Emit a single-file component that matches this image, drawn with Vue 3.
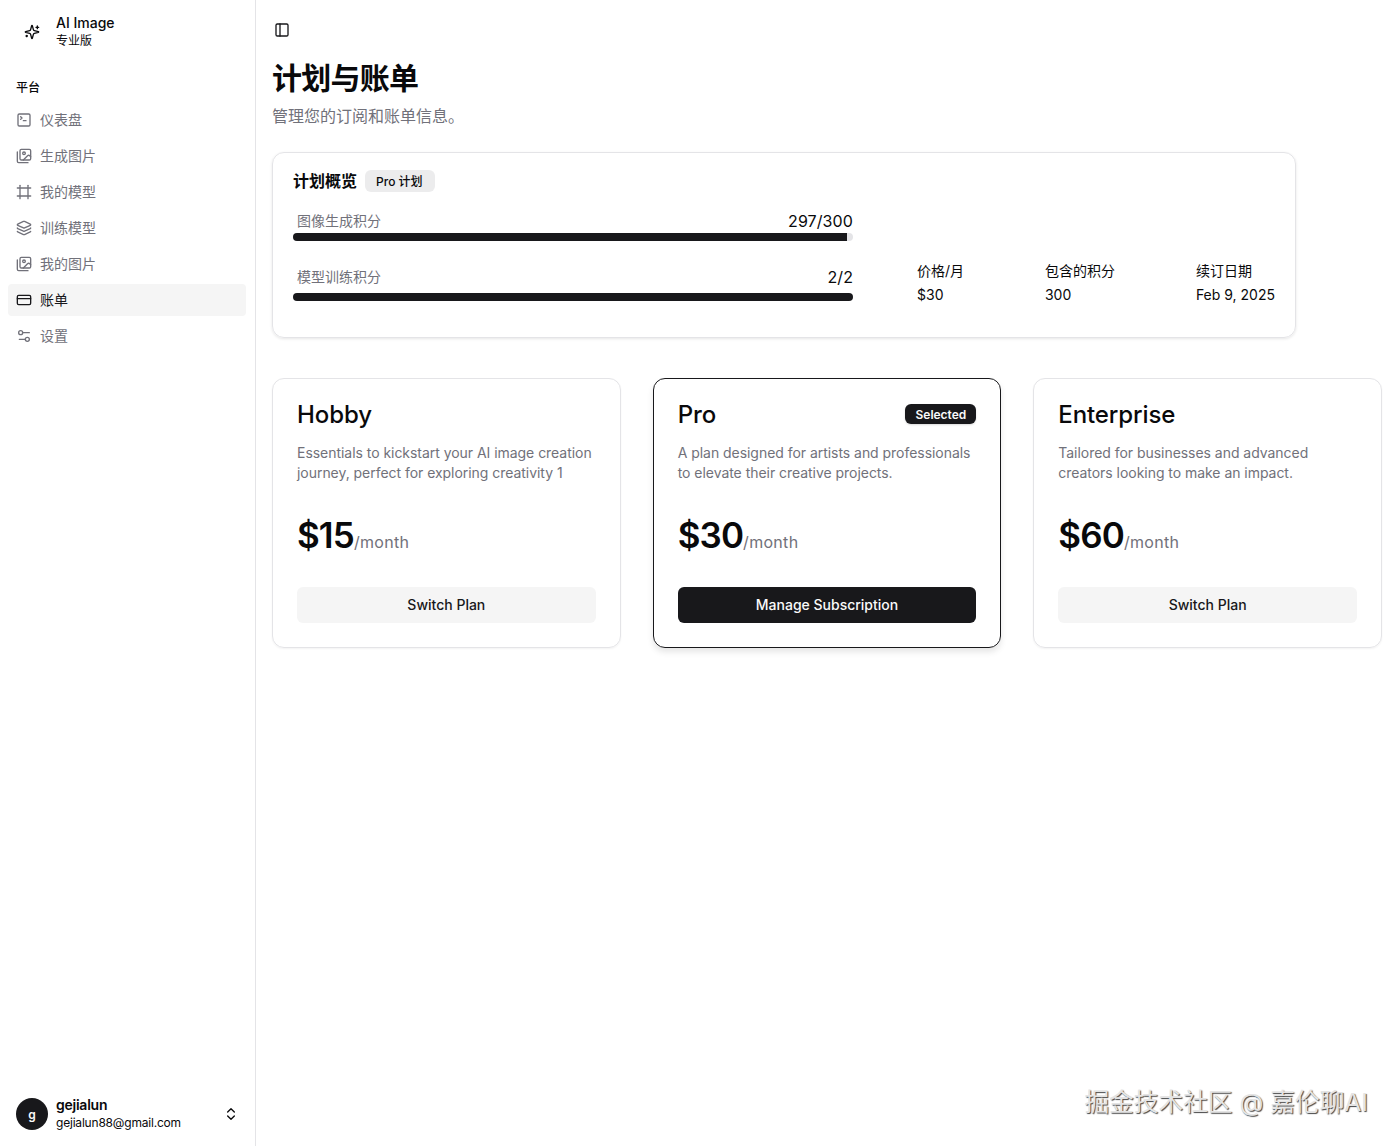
<script setup>
const imagesIcon = [
  'M18 22H4a2 2 0 0 1-2-2V6',
  'm22 13-1.296-1.296a2.41 2.41 0 0 0-3.408 0L11 18',
  'M14 8a2 2 0 1 1-4 0a2 2 0 1 1 4 0',
  'M8 2h12a2 2 0 0 1 2 2v12a2 2 0 0 1-2 2H8a2 2 0 0 1-2-2V4a2 2 0 0 1 2-2z'
]

const navItems = [
  { label: '仪表盘', icon: ['m7 11 2-2-2-2', 'M11 13h4', 'M5 3h14a2 2 0 0 1 2 2v14a2 2 0 0 1-2 2H5a2 2 0 0 1-2-2V5a2 2 0 0 1 2-2z'] },
  { label: '生成图片', icon: imagesIcon },
  { label: '我的模型', icon: ['M22 6H2', 'M22 18H2', 'M6 2v20', 'M18 2v20'] },
  {
    label: '训练模型',
    icon: [
      'M12.83 2.18a2 2 0 0 0-1.66 0L2.6 6.08a1 1 0 0 0 0 1.83l8.58 3.91a2 2 0 0 0 1.66 0l8.58-3.9a1 1 0 0 0 0-1.83z',
      'M2 12a1 1 0 0 0 .58.91l8.6 3.91a2 2 0 0 0 1.65 0l8.58-3.9A1 1 0 0 0 22 12',
      'M2 17a1 1 0 0 0 .58.91l8.6 3.91a2 2 0 0 0 1.65 0l8.58-3.9A1 1 0 0 0 22 17'
    ]
  },
  { label: '我的图片', icon: imagesIcon },
  { label: '账单', active: true, icon: ['M4 5h16a2 2 0 0 1 2 2v10a2 2 0 0 1-2 2H4a2 2 0 0 1-2-2V7a2 2 0 0 1 2-2z', 'M2 10h20'] },
  { label: '设置', icon: ['M20 7h-9', 'M14 17H5', 'M20 17a3 3 0 1 1-6 0a3 3 0 1 1 6 0', 'M10 7a3 3 0 1 1-6 0a3 3 0 1 1 6 0'] }
]

const credits = [
  { label: '图像生成积分', value: '297/300', percent: 99 },
  { label: '模型训练积分', value: '2/2', percent: 100 }
]

const facts = [
  { label: '价格/月', value: '$30' },
  { label: '包含的积分', value: '300' },
  { label: '续订日期', value: 'Feb 9, 2025' }
]

const plans = [
  { name: 'Hobby', desc: 'Essentials to kickstart your AI image creation journey, perfect for exploring creativity 1', price: '$15' },
  { name: 'Pro', desc: 'A plan designed for artists and professionals to elevate their creative projects.', price: '$30', selected: true },
  { name: 'Enterprise', desc: 'Tailored for businesses and advanced creators looking to make an impact.', price: '$60' }
]
</script>

<template>
  <div class="layout">
    <aside class="sidebar">
      <div class="brand">
        <div class="brand-icon">
          <svg class="logo" viewBox="0 0 24 24">
            <path d="M9.937 15.5A2 2 0 0 0 8.5 14.063l-6.135-1.582a.5.5 0 0 1 0-.962L8.5 9.936A2 2 0 0 0 9.937 8.5l1.582-6.135a.5.5 0 0 1 .963 0L14.063 8.5A2 2 0 0 0 15.5 9.937l6.135 1.581a.5.5 0 0 1 0 .964L15.5 14.063a2 2 0 0 0-1.437 1.437l-1.582 6.135a.5.5 0 0 1-.963 0z" />
            <path d="M20 3v4" />
            <path d="M22 5h-4" />
            <path d="M4 17v2" />
            <path d="M5 18H3" />
          </svg>
        </div>
        <div class="brand-text">
          <span class="brand-name">AI Image</span>
          <span class="brand-plan">专业版</span>
        </div>
      </div>

      <nav class="nav">
        <div class="nav-label">平台</div>
        <a v-for="item in navItems" :key="item.label" class="nav-item" :class="{ active: item.active }">
          <svg class="icon" viewBox="0 0 24 24">
            <path v-for="d in item.icon" :key="d" :d="d" />
          </svg>
          <span class="nav-text">{{ item.label }}</span>
        </a>
      </nav>

      <div class="user">
        <div class="avatar">g</div>
        <div class="user-text">
          <span class="user-name">gejialun</span>
          <span class="user-email">gejialun88@gmail.com</span>
        </div>
        <svg class="icon chevrons" viewBox="0 0 24 24">
          <path d="m7 15 5 5 5-5" />
          <path d="m7 9 5-5 5 5" />
        </svg>
      </div>
    </aside>

    <main class="main">
      <div class="topbar">
        <svg class="icon" viewBox="0 0 24 24">
          <path d="M5 3h14a2 2 0 0 1 2 2v14a2 2 0 0 1-2 2H5a2 2 0 0 1-2-2V5a2 2 0 0 1 2-2z" />
          <path d="M9 3v18" />
        </svg>
      </div>

      <h1 class="title">计划与账单</h1>
      <p class="subtitle">管理您的订阅和账单信息。</p>

      <section class="overview">
        <div class="overview-head">
          <h2>计划概览</h2>
          <span class="plan-badge">Pro 计划</span>
        </div>
        <div class="overview-body">
          <div class="credits">
            <div v-for="c in credits" :key="c.label" class="credit">
              <div class="credit-row">
                <span class="credit-label">{{ c.label }}</span>
                <span class="credit-value">{{ c.value }}</span>
              </div>
              <div class="track">
                <div class="fill" :style="{ width: c.percent + '%' }"></div>
              </div>
            </div>
          </div>
          <div class="facts">
            <div v-for="f in facts" :key="f.label" class="fact">
              <span>{{ f.label }}</span>
              <span>{{ f.value }}</span>
            </div>
          </div>
        </div>
      </section>

      <section class="plans">
        <div v-for="plan in plans" :key="plan.name" class="plan" :class="{ selected: plan.selected }">
          <div class="plan-head">
            <h3>{{ plan.name }}</h3>
            <span v-if="plan.selected" class="selected-badge">Selected</span>
          </div>
          <p class="plan-desc">{{ plan.desc }}</p>
          <div class="price"><strong>{{ plan.price }}</strong><span>/month</span></div>
          <button class="plan-btn">{{ plan.selected ? 'Manage Subscription' : 'Switch Plan' }}</button>
        </div>
      </section>

      <div class="watermark">掘金技术社区 @ 嘉伦聊AI</div>
    </main>
  </div>
</template>

<style>
html, body {
  background: #fff;
}
</style>

<style scoped>
* {
  box-sizing: border-box;
}

.layout {
  display: flex;
  min-height: 100vh;
  font-family: Inter, "Noto Sans CJK SC", sans-serif;
  color: #09090b;
  background: #fff;
}

.sidebar {
  width: 256px;
  flex-shrink: 0;
  display: flex;
  flex-direction: column;
  padding: 8px 9px 8px 8px;
  border-right: 1px solid #e4e4e7;
}

.brand {
  display: flex;
  align-items: center;
  gap: 8px;
  height: 48px;
  padding: 8px;
}

.brand-icon {
  width: 32px;
  height: 32px;
  display: flex;
  align-items: center;
  justify-content: center;
}

.logo {
  width: 16px;
  height: 16px;
  fill: none;
  stroke: #09090b;
  stroke-width: 2;
  stroke-linecap: round;
  stroke-linejoin: round;
}

.brand-text {
  display: flex;
  flex-direction: column;
  gap: 2px;
}

.brand-name {
  font-size: 14px;
  line-height: 16px;
  font-weight: 500;
}

.brand-plan {
  font-size: 12px;
  line-height: 16px;
}

.nav {
  display: flex;
  flex-direction: column;
  gap: 4px;
  margin-top: 16px;
  flex: 1;
}

.nav-label {
  height: 28px;
  padding: 0 8px;
  display: flex;
  align-items: center;
  font-size: 12px;
  font-weight: 500;
}

.nav-item {
  display: flex;
  align-items: center;
  gap: 8px;
  height: 32px;
  padding: 0 8px;
  border-radius: 4px;
  font-size: 14px;
  color: #71717a;
}

.nav-text {
  margin-bottom: 2px;
}

.nav-item.active {
  background: #f5f5f5;
  color: #18181b;
}

.icon {
  width: 16px;
  height: 16px;
  flex-shrink: 0;
  fill: none;
  stroke: currentColor;
  stroke-width: 2;
  stroke-linecap: round;
  stroke-linejoin: round;
}

.user {
  display: flex;
  align-items: center;
  gap: 8px;
  height: 48px;
  padding: 8px 7px 8px 8px;
}

.avatar {
  width: 32px;
  height: 32px;
  border-radius: 50%;
  background: #18181b;
  color: #fafafa;
  display: flex;
  align-items: center;
  justify-content: center;
  font-size: 12px;
  font-weight: 600;
}

.user-text {
  flex: 1;
  display: flex;
  flex-direction: column;
  gap: 2px;
}

.user-name {
  font-size: 14px;
  line-height: 16px;
  font-weight: 600;
  letter-spacing: -0.25px;
}

.user-email {
  font-size: 12px;
  line-height: 16px;
  letter-spacing: -0.2px;
}

.chevrons {
  color: #09090b;
}

.main {
  flex: 1;
  min-width: 0;
  padding: 0 16px;
  position: relative;
}

.topbar {
  height: 60px;
  display: flex;
  align-items: center;
  padding-left: 2px;
  color: #18181b;
}

.title {
  margin: 0;
  font-size: 30px;
  line-height: 36px;
  font-weight: 700;
  letter-spacing: -0.75px;
}

.subtitle {
  margin: 8px 0 0;
  font-size: 16px;
  line-height: 24px;
  color: #71717a;
}

.overview {
  width: 1024px;
  height: 186px;
  margin-top: 24px;
  padding: 16px 20px;
  border: 1px solid #e4e4e7;
  border-radius: 12px;
  box-shadow: 0 1px 3px rgba(0, 0, 0, 0.1);
}

.overview-head {
  display: flex;
  align-items: center;
  gap: 8px;
}

.overview-head h2 {
  margin: 0;
  font-size: 16px;
  line-height: 24px;
  font-weight: 700;
}

.plan-badge {
  height: 22px;
  padding: 0 12px 2px 11px;
  display: flex;
  align-items: center;
  border-radius: 6px;
  background: #ececed;
  font-size: 12px;
  font-weight: 500;
}

.overview-body {
  display: grid;
  grid-template-columns: 560px 1fr;
  gap: 64px;
  margin-top: 16px;
}

.credits {
  display: flex;
  flex-direction: column;
  gap: 24px;
}

.credit-row {
  display: flex;
  justify-content: space-between;
  align-items: center;
  height: 24px;
  padding-left: 4px;
}

.credit:last-child .credit-row {
  margin-bottom: 4px;
}

.credit-label {
  font-size: 14px;
  color: #71717a;
  margin-bottom: 2px;
}

.credit-value {
  font-size: 16px;
  letter-spacing: 0.1px;
}

.track {
  height: 8px;
  border-radius: 4px;
  background: #e4e4e7;
  overflow: hidden;
}

.fill {
  height: 100%;
  background: #18181b;
}

.facts {
  display: flex;
  justify-content: space-between;
  align-items: flex-start;
  padding-top: 52px;
}

.fact {
  display: flex;
  flex-direction: column;
  gap: 4px;
  font-size: 14px;
  line-height: 20px;
}

.plans {
  display: grid;
  grid-template-columns: repeat(3, 1fr);
  gap: 32px;
  margin-top: 40px;
}

.plan {
  height: 270px;
  padding: 24px;
  border: 1px solid #e4e4e7;
  border-radius: 12px;
  box-shadow: 0 1px 2px rgba(0, 0, 0, 0.05);
}

.plan.selected {
  border-color: #18181b;
  box-shadow: 0 4px 6px rgba(0, 0, 0, 0.1);
}

.plan-head {
  display: flex;
  justify-content: space-between;
  align-items: center;
  height: 24px;
  margin-top: -1px;
}

.plan-head h3 {
  margin: 0;
  font-size: 24px;
  font-weight: 500;
  letter-spacing: -0.1px;
}

.selected-badge {
  height: 20px;
  padding: 0 10px;
  display: flex;
  align-items: center;
  border-radius: 6px;
  background: #18181b;
  color: #fafafa;
  font-size: 12px;
  font-weight: 600;
  box-shadow: 0 1px 2px rgba(0, 0, 0, 0.15);
}

.plan-desc {
  margin: 17px 0 0;
  font-size: 14px;
  line-height: 20px;
  color: #71717a;
  letter-spacing: -0.04px;
}

.price {
  margin-top: 32px;
  height: 40px;
  display: flex;
  align-items: baseline;
}

.price strong {
  font-size: 35px;
  line-height: 40px;
  font-weight: 600;
  letter-spacing: -0.9px;
}

.price span {
  font-size: 16px;
  color: #71717a;
  letter-spacing: 0.3px;
}

.plan-btn {
  display: block;
  width: 100%;
  height: 36px;
  margin-top: 32px;
  padding: 0 0 2px;
  border: 0;
  border-radius: 6px;
  background: #f5f5f5;
  color: #18181b;
  font: 500 14px Inter, "Noto Sans CJK SC", sans-serif;
}

.selected .plan-btn {
  background: #18181b;
  color: #fafafa;
}

.watermark {
  position: absolute;
  right: 30px;
  top: 1086px;
  font-size: 24.7px;
  line-height: 32px;
  white-space: nowrap;
  color: #e4e4e4;
  text-shadow: 1px 1px 1px #444;
}
</style>
